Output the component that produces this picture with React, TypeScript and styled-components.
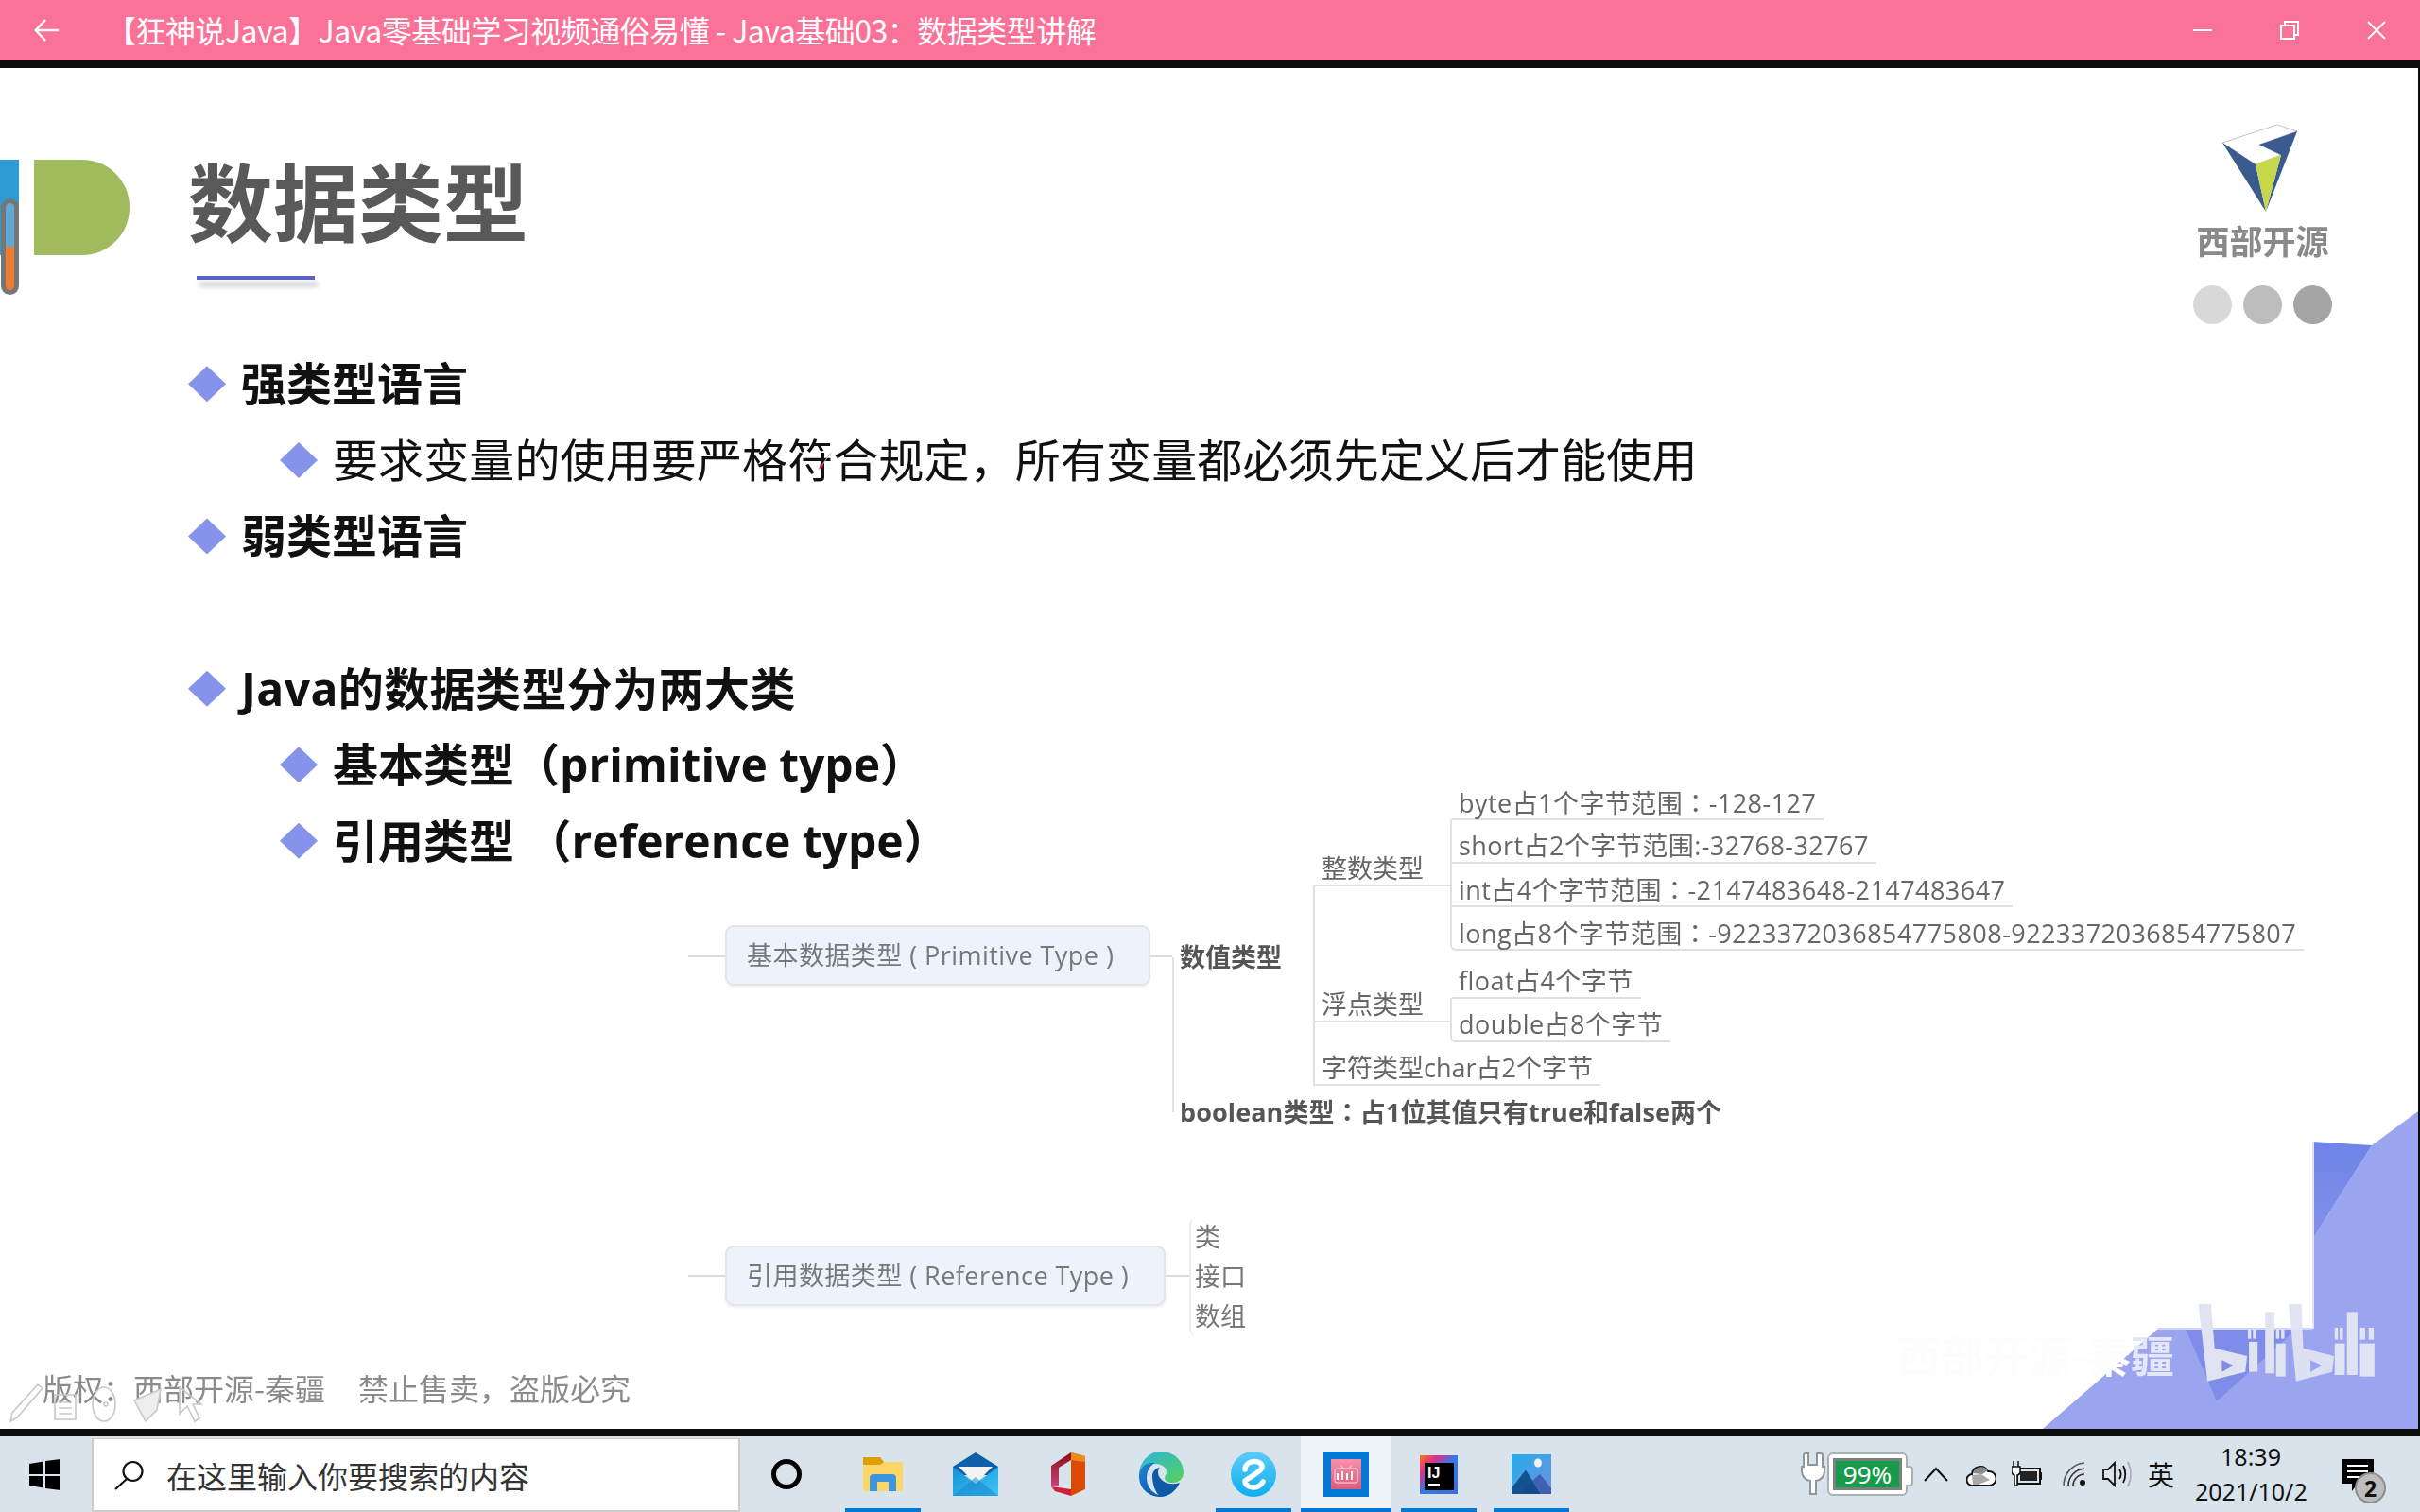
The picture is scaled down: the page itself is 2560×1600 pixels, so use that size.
import React from "react";
import styled, { createGlobalStyle } from "styled-components";

const CJK = `"Noto Sans CJK SC", "Noto Sans", sans-serif`;
const MIXED = `"Open Sans", "Noto Sans CJK SC", sans-serif`;

const Global = createGlobalStyle`
  html, body { margin: 0; padding: 0; background: #fff; }
  * { box-sizing: border-box; }
`;

const Screen = styled.div`
  width: 2560px; height: 1600px; display: flex; flex-direction: column; overflow: hidden;
  font-family: ${CJK}; background: #0b0d0a;
`;

/* ---------- title bar ---------- */
const TitleBar = styled.header`
  height: 64px; flex: none; display: flex; align-items: center; background: #fb7299; color: #fff;
`;
const BackButton = styled.div`
  width: 96px; padding-left: 36px; display: flex; align-items: center; flex: none;
`;
const VideoTitle = styled.h1`
  margin: 0 0 2px 16px; flex: 1; font-size: 32px; font-weight: 400; line-height: 62px; white-space: nowrap;
  font-family: ${CJK}; letter-spacing: -0.5px;
`;
const WindowButton = styled.div`
  width: 92px; height: 64px; flex: none; display: flex; align-items: center; justify-content: center;
`;

const Rule = styled.div`
  height: 8px; flex: none; background: #0b0d0a;
`;

/* ---------- slide ---------- */
const Slide = styled.main`
  position: relative; flex: none; height: 1440px; background: #fff; border-right: 2px solid #0b0d0a;
  overflow: hidden; filter: blur(0.55px);
`;
const SlideHeader = styled.div`
  height: 294px; display: flex; justify-content: space-between; padding: 59px 91px 0 0;
`;
const TitleGroup = styled.div`
  display: flex; align-items: flex-start; padding-top: 38px;
`;
const BlueTab = styled.div`
  position: relative; width: 20px; height: 101px; background: #2e9bd6;
`;
const Thermo = styled.div`
  position: absolute; left: 1px; top: 41px; width: 19px; height: 102px; border: 5px solid #767676;
  border-radius: 10px; background: linear-gradient(#61a8d2 0 50%, #ee7d31 50% 100%);
`;
const GreenTab = styled.div`
  width: 101px; height: 101px; margin-left: 16px; background: #9fbb5e; border-radius: 0 50px 50px 0 / 0 50px 50px 0;
`;
const TitleColumn = styled.div`
  margin: -4px 0 0 62px; display: flex; flex-direction: column;
`;
const SlideTitle = styled.h2`
  margin: 0; font-size: 90px; line-height: 90px; font-weight: 700; color: #595959; white-space: nowrap;
`;
const TitleUnderline = styled.div`
  width: 125px; height: 4px; margin: 37px 0 0 9px; background: #5b62c4; box-shadow: 3px 7px 5px rgba(90, 90, 120, 0.35);
`;
const LogoBlock = styled.div`
  width: 147px; display: flex; flex-direction: column; align-items: center;
`;
const LogoMark = styled.div`
  display: flex; margin-right: 6px;
`;
const LogoText = styled.div`
  margin-top: 4px; font-size: 35px; line-height: 46px; font-weight: 700; color: #8a8a8a; white-space: nowrap;
`;
const DotRow = styled.div`
  width: 100%; margin-top: 25px; display: flex; justify-content: space-between;
`;
const Dot = styled.div<{ $c: string }>`
  width: 41px; height: 41px; border-radius: 50%; background: ${(p) => p.$c};
`;

const BulletList = styled.ul`
  margin: 0; padding: 0; list-style: none;
`;
const Bullet = styled.li<{ $level: number; $bold?: boolean; $track?: number }>`
  height: 80.6px; display: flex; align-items: center; gap: 16px;
  padding-left: ${(p) => (p.$level === 1 ? 199 : 296)}px;
  font-family: ${MIXED}; font-size: 48px; font-weight: ${(p) => (p.$bold ? 700 : 400)}; color: #111; white-space: pre;
  letter-spacing: ${(p) => p.$track ?? 0}px;
`;
const Diamond = styled.i`
  width: 40px; height: 38px; flex: none; background: #8593ea; clip-path: polygon(50% 0, 100% 50%, 50% 100%, 0 50%);
`;
const BulletText = styled.span`
  margin-top: -6px;
`;

/* ---------- mind map ---------- */
const Tree = styled.section<{ $mt: number }>`
  display: flex; align-items: flex-start; margin: ${(p) => p.$mt}px 0 0 728px;
  font-family: ${MIXED}; font-size: 27px; line-height: 34px; color: #666; white-space: nowrap;
`;
const Stub = styled.div<{ $mt: number; $w: number }>`
  width: ${(p) => p.$w}px; height: 2px; margin-top: ${(p) => p.$mt}px; background: #dcdcdc; flex: none;
`;
const RootBox = styled.div<{ $mt: number; $w: number }>`
  width: ${(p) => p.$w}px; height: 64px; margin-top: ${(p) => p.$mt}px; flex: none; padding-left: 21px;
  display: flex; align-items: center; background: #eef2fa; border: 2px solid #e1e5ec; border-radius: 9px;
  color: #74787f; box-shadow: 0 2px 3px rgba(0, 0, 0, 0.06); letter-spacing: 0.45px;
`;
const BranchColumn = styled.div`
  position: relative; padding-left: 8px;
  &::before { content: ""; position: absolute; left: 0; top: 191px; bottom: 17px; width: 2px; background: #e2e2e2; }
`;
const NodeRow = styled.div`
  display: flex; align-items: flex-start;
`;
const BoldNode = styled.div`
  width: 108px; margin-top: 174px; font-weight: 700; color: #555; flex: none;
`;
const BoolNode = styled.div`
  margin-top: 10px; font-weight: 700; color: #555; letter-spacing: 0.1px;
`;
const NumberColumn = styled.div`
  position: relative; margin-left: 33px;
  &::before { content: ""; position: absolute; left: 0; top: 115px; bottom: 0; width: 2px; background: #e0e0e0; }
`;
const Category = styled.div<{ $mt?: number }>`
  display: flex; align-items: flex-start; margin-top: ${(p) => p.$mt ?? 0}px;
`;
const CategoryLabel = styled.div<{ $mt: number }>`
  width: 145px; height: 36px; margin-top: ${(p) => p.$mt}px; padding-left: 9px; flex: none;
  border-bottom: 2px solid #e0e0e0;
`;
const LeafGroup = styled.div`
  display: flex; flex-direction: column; align-items: flex-start;
`;
const Leaf = styled.div`
  height: 46px; padding: 10px 8px 0 7px; border-bottom: 2px solid #e0e0e0; border-left: 2px solid #e0e0e0; color: #666; letter-spacing: 0.45px;
  &:first-child { border-left-color: transparent; }
  &:last-child { border-bottom-left-radius: 6px; }
`;
const Colon = styled.span`
  font-family: "Noto Sans CJK TC", sans-serif;
`;
const CharRow = styled.div`
  display: inline-block; height: 46px; padding: 10px 8px 0 9px; border-bottom: 2px solid #e0e0e0;
`;
const RefList = styled.div`
  padding-left: 4px; border-left: 2px solid #ececec; border-radius: 8px; color: #777;
`;
const RefItem = styled.div`
  height: 42px; display: flex; align-items: center;
`;
const Copyright = styled.footer`
  display: flex; gap: 35px; margin: 34px 0 0 45px; font-size: 32px; line-height: 40px; color: #8b8b8b; white-space: nowrap;
`;

/* ---------- overlays ---------- */
const CornerArt = styled.svg`
  position: absolute; right: 0; bottom: 0;
`;
const Watermark = styled.div`
  position: absolute; right: 258px; bottom: 52px; font-size: 46px; line-height: 56px; font-weight: 700; white-space: nowrap; color: #fdfdfd;
`;
const WatermarkEnd = styled.span`
  color: #e4e7f8;
`;
const PenTools = styled.svg`
  position: absolute; left: 10px; bottom: 6px;
`;
const PenMark = styled.svg`
  position: absolute; left: 866px; top: 406px;
`;

/* ---------- task bar ---------- */
const TaskBar = styled.footer`
  height: 80px; flex: none; display: flex; background: #d9e3ec; color: #111;
`;
const StartButton = styled.div`
  width: 97px; flex: none; display: flex; align-items: center; padding-left: 31px;
`;
const SearchBox = styled.div`
  width: 686px; height: 78px; margin-top: 2px; flex: none; display: flex; align-items: center; padding-left: 22px; gap: 23px;
  background: #fff; border: 2px solid #ccc; border-top-width: 1px; border-bottom-width: 2px; font-size: 32px; color: #333;
`;
const CortanaSlot = styled.div`
  width: 98px; margin-right: 4px; flex: none; display: flex; align-items: center; justify-content: center;
`;
const Slot = styled.div<{ $on?: boolean; $active?: boolean }>`
  position: relative; width: 98px; flex: none; display: flex; align-items: center; justify-content: center;
  &::before {
    content: ""; position: absolute; top: 0; bottom: 0; left: 1px; right: 1px;
    background: ${(p) => (p.$active ? "#eef3f7" : "transparent")};
  }
  &::after {
    content: ""; position: absolute; bottom: 0; height: 4px;
    left: ${(p) => (p.$active ? 1 : 9)}px; right: ${(p) => (p.$active ? 1 : 9)}px;
    background: ${(p) => (p.$on ? "#0078d4" : "transparent")};
  }
  & > svg { position: relative; }
`;
const Tray = styled.div`
  margin-left: auto; display: flex; align-items: center; padding-right: 34px;
`;
const TrayItem = styled.div<{ $ml: number; $w: number }>`
  width: ${(p) => p.$w}px; margin-left: ${(p) => p.$ml}px; flex: none; display: flex; align-items: center; justify-content: center;
`;
const Battery = styled.div`
  position: relative; width: 85px; height: 46px; padding: 4px; background: #fff; border: 2px solid #a9b0b5; border-radius: 6px;
  &::after { content: ""; position: absolute; right: -8px; top: 12px; width: 6px; height: 18px; background: #fff; border: 2px solid #a9b0b5; border-left: 0; border-radius: 0 4px 4px 0; }
`;
const BatteryFill = styled.div`
  height: 100%; display: flex; align-items: center; justify-content: center; background: #179a4a; border: 3px solid #7a7f80;
  font-family: "Noto Sans", sans-serif; font-size: 26px; color: #fff;
`;
const LangMark = styled.span`
  font-size: 28px; line-height: 1; color: #111;
`;
const Clock = styled.div`
  width: 118px; margin-left: 22px; flex: none; text-align: center; font-family: "Noto Sans", sans-serif; font-size: 25px; line-height: 37px; color: #111; white-space: nowrap;
`;
const Notice = styled.div`
  position: relative; width: 52px; height: 60px; margin-left: 34px; padding: 14px 0 0 4px; flex: none;
`;
const NoticeBadge = styled.span`
  position: absolute; left: 17px; top: 28px; width: 33px; height: 33px; border-radius: 50%; background: #bdbdbd; border: 2px solid #8d8d8d;
  display: flex; align-items: center; justify-content: center; font-family: "Noto Sans", sans-serif; font-size: 23px; font-weight: 700; color: #111;
`;

/* ---------- icons ---------- */
const ArrowBack = () => (
  <svg width="26" height="24" viewBox="0 0 26 24" fill="none" stroke="#fff" strokeWidth="2.4">
    <path d="M12 1 1.8 12 12 23M2 12h24" />
  </svg>
);
const Minimize = () => <svg width="20" height="4" viewBox="0 0 20 4"><rect y="1" width="20" height="2" fill="#fff" /></svg>;
const Restore = () => (
  <svg width="20" height="20" viewBox="0 0 20 20" fill="none" stroke="#fff" strokeWidth="2">
    <rect x="1" y="5" width="14" height="14" />
    <path d="M5 5V1h14v14h-4" />
  </svg>
);
const CloseX = () => (
  <svg width="20" height="20" viewBox="0 0 20 20" stroke="#fff" strokeWidth="2"><path d="M1 1l18 18M19 1 1 19" /></svg>
);
const BrandLogo = () => (
  <svg width="84" height="96" viewBox="0 0 84 96">
    <polygon points="2,20 60,1 81,8 41,22 64,33 37,43" fill="#fff" stroke="#b5b5b5" strokeWidth="0.8" />
    <polygon points="2,20 37,43 48,93" fill="#3b5a8f" />
    <polygon points="81,8 41,22 64,33 48,93" fill="#3b5a8f" />
    <polygon points="37,43 64,33 48,93" fill="#c6d84a" />
  </svg>
);
const Corner = () => (
  <CornerArt width="558" height="362" viewBox="0 0 558 362">
    <defs>
      <linearGradient id="cornerDark" x1="0" y1="0" x2="0" y2="1">
        <stop offset="0" stopColor="#6e84e8" />
        <stop offset="1" stopColor="#8490ea" />
      </linearGradient>
    </defs>
    <polygon points="161,362 283,256 446,256 446,162 509,62 558,26 558,362" fill="#9ba4ee" />
    <polygon points="446,58 509,62 446,162" fill="url(#cornerDark)" />
    <polygon points="312,256 430,256 345,333" fill="#7f8cea" />
    <rect x="446" y="58" width="2" height="198" fill="#dfe4fa" />
    <rect x="283" y="255" width="163" height="2" fill="#cfd5f8" />
    <g transform="translate(-40 0) scale(0.3827 0.3333)" fill="#e0e3f1">
      <path fillRule="evenodd" d="M955 690 990 690 1000 830 1090 855 1085 905 980 935ZM1020 868 1052 885 1020 905Z" />
      <path fillRule="evenodd" d="M1205 690 1240 690 1245 830 1330 855 1325 905 1225 935ZM1265 868 1297 885 1265 905Z" opacity="0.95" />
      <rect x="1092" y="770" width="9" height="30" /><rect x="1106" y="770" width="9" height="30" />
      <rect x="1095" y="810" width="24" height="95" />
      <rect x="1140" y="715" width="25" height="195" />
      <rect x="1170" y="770" width="9" height="30" /><rect x="1184" y="770" width="9" height="30" />
      <rect x="1170" y="815" width="26" height="105" />
      <rect x="1332" y="765" width="9" height="38" /><rect x="1346" y="765" width="9" height="38" />
      <rect x="1332" y="815" width="28" height="100" />
      <rect x="1366" y="715" width="29" height="200" />
      <rect x="1402" y="765" width="14" height="38" /><rect x="1426" y="765" width="14" height="38" />
      <rect x="1402" y="815" width="40" height="105" />
    </g>
  </CornerArt>
);
const Tools = () => (
  <PenTools width="205" height="44" viewBox="0 0 205 44" fill="none" stroke="#c9c9c9" strokeWidth="1.6">
    <path d="M1 42 3 33 30 3l5 4L8 38Z" />
    <rect x="48" y="14" width="22" height="26" />
    <path d="M52 22h14M52 28h14M52 34h14" />
    <ellipse cx="100" cy="24" rx="12" ry="18" />
    <circle cx="102" cy="24" r="2" />
    <path d="M132 20l28-12-4 22-12 12Z" fill="#eeeeee" />
    <path d="M180 6v28l8-8 8 16 5-3-7-15h9Z" />
  </PenTools>
);
const WinLogo = () => (
  <svg width="33" height="33" viewBox="0 0 33 33" fill="#000">
    <polygon points="0,5 15,2.5 15,16 0,16" /><polygon points="17,2 33,0 33,16 17,16" />
    <polygon points="0,18 15,18 15,30.5 0,28" /><polygon points="17,18 33,18 33,33 17,31" />
  </svg>
);
const Magnifier = () => (
  <svg width="32" height="32" viewBox="0 0 32 32" fill="none" stroke="#111" strokeWidth="2.2">
    <circle cx="19.5" cy="12" r="10" /><path d="M13 20 1 31" />
  </svg>
);
const Ring = () => (
  <svg width="34" height="34" viewBox="0 0 34 34" fill="none"><circle cx="17" cy="17" r="13.5" stroke="#000" strokeWidth="5" /></svg>
);
const FolderIcon = () => (
  <svg width="42" height="36" viewBox="0 0 42 36">
    <path d="M0 0h18l4 5-4 6H0Z" fill="#df9f00" />
    <path d="M0 8h18l4-3h20v29a2 2 0 0 1-2 2H2a2 2 0 0 1-2-2Z" fill="#fcd667" />
    <path d="M7 36V22a4 4 0 0 1 4-4h20a4 4 0 0 1 4 4v14h-8V26H15v10Z" fill="#3f95dd" />
  </svg>
);
const MailIcon = () => (
  <svg width="48" height="46" viewBox="0 0 48 46">
    <defs><linearGradient id="mailB" x1="0" y1="0" x2="1" y2="1"><stop offset="0" stopColor="#1490d8" /><stop offset="1" stopColor="#3fc6f6" /></linearGradient></defs>
    <polygon points="0,15 24,0 48,15 48,24 0,24" fill="#0f5fa9" />
    <polygon points="6,15 42,15 24,33" fill="#f3f3f3" />
    <polygon points="0,15 24,33 48,15 48,46 0,46" fill="url(#mailB)" />
    <polygon points="0,46 24,26 48,46" fill="#1a86cf" opacity="0.55" />
  </svg>
);
const OfficeIcon = () => (
  <svg width="36" height="46" viewBox="0 0 36 46">
    <defs><linearGradient id="offR" x1="0" y1="0" x2="0" y2="1"><stop offset="0" stopColor="#8e0f12" /><stop offset="1" stopColor="#c7437e" /></linearGradient></defs>
    <path d="M0 14 21 0v8L8 16v20l-8 0Z" fill="url(#offR)" />
    <path d="M0 36l21 3v7L4 41Z" fill="#d21e35" />
    <path d="M21 0 36 4v35L21 46Z" fill="#dd4a06" />
    <path d="M21 0 36 4v6L21 8Z" fill="#f08a1c" />
  </svg>
);
const EdgeIcon = () => (
  <svg width="48" height="48" viewBox="0 0 48 48">
    <defs>
      <linearGradient id="edgeA" x1="0" y1="0" x2="1" y2="1"><stop offset="0" stopColor="#2bb3df" /><stop offset="1" stopColor="#56d35a" /></linearGradient>
      <linearGradient id="edgeB" x1="0" y1="0" x2="1" y2="1"><stop offset="0" stopColor="#1c87d8" /><stop offset="1" stopColor="#0c4f9c" /></linearGradient>
    </defs>
    <path d="M24 0c14 0 24 10 24 22 0 7-5 11-11 11-5 0-9-2-9-5 0-2 2-3 2-7 0-5-6-8-13-8C10 13 3 19 1 24 2 10 12 0 24 0Z" fill="url(#edgeA)" />
    <path d="M1 24C3 15 11 11 18 12c-6 3-9 9-9 16 0 10 8 19 19 20h-4C10 48 0 38 1 24Z" fill="url(#edgeB)" />
    <path d="M15 26c0-5 4-9 8-9-3 3-3 9 3 14 5 4 12 4 18 2-4 9-12 15-21 15-5-5-8-14-8-22Z" fill="#0e5aa8" />
  </svg>
);
const BrowserIcon = () => (
  <svg width="48" height="48" viewBox="0 0 48 48">
    <defs><linearGradient id="br" x1="0" y1="0" x2="0" y2="1"><stop offset="0" stopColor="#5ccbfa" /><stop offset="1" stopColor="#0eaff0" /></linearGradient></defs>
    <circle cx="24" cy="24" r="24" fill="url(#br)" />
    <path d="M15 19C15 9 31 8 33 15 34 19 30 21 15 31 15 39 29 41 34 32" fill="none" stroke="#fff" strokeWidth="5.5" strokeLinecap="round" strokeLinejoin="round" />
  </svg>
);
const BiliTile = () => (
  <svg width="48" height="48" viewBox="0 0 48 48">
    <defs><linearGradient id="bl" x1="0" y1="0" x2="0" y2="1"><stop offset="0" stopColor="#f98fab" /><stop offset="1" stopColor="#dd5b7d" /></linearGradient></defs>
    <rect width="48" height="48" fill="#0078d4" />
    <rect x="8" y="8" width="32" height="32" fill="url(#bl)" />
    <rect x="12" y="18" width="24" height="15" rx="2" fill="none" stroke="#fbe1e8" strokeWidth="1" />
    <path d="M14 23h2v7h-2zM19 21h2v9h-2zM24 23h2v7h-2zM29 21h2v9h-2z" fill="#fff" />
    <path d="M18 14l3 4M30 14l-3 4" stroke="#fbe1e8" strokeWidth="1" />
  </svg>
);
const IdeaIcon = () => (
  <svg width="40" height="41" viewBox="0 0 40 41">
    <defs><linearGradient id="ij" x1="0" y1="0" x2="1" y2="1"><stop offset="0" stopColor="#f97a12" /><stop offset="0.25" stopColor="#d9308e" /><stop offset="0.5" stopColor="#2e7be8" /><stop offset="1" stopColor="#3f6ce0" /></linearGradient></defs>
    <rect width="40" height="41" fill="url(#ij)" />
    <rect x="5" y="8" width="31" height="29" fill="#000" />
    <text x="8" y="24" fill="#fff" fontFamily='"Liberation Sans", sans-serif' fontWeight="700" fontSize="16">IJ</text>
    <rect x="9" y="30" width="12" height="2" fill="#fff" />
  </svg>
);
const PhotosIcon = () => (
  <svg width="42" height="42" viewBox="0 0 42 42">
    <defs><linearGradient id="ph" x1="0" y1="0" x2="1" y2="1"><stop offset="0" stopColor="#23aeeb" /><stop offset="1" stopColor="#6f8fe0" /></linearGradient></defs>
    <rect width="42" height="42" fill="url(#ph)" />
    <ellipse cx="28" cy="9" rx="4" ry="4.5" fill="#f2f2f2" />
    <polygon points="0,36 15,17 31,42 0,42" fill="#134a8a" />
    <polygon points="0,36 15,17 22,28 10,42 0,42" fill="#15508f" />
    <polygon points="22,28 30,21 42,36 42,42 31,42" fill="#3f5fb0" />
  </svg>
);
const Plug = () => (
  <svg width="26" height="46" viewBox="0 0 26 46" fill="#fff" stroke="#8f979c" strokeWidth="2">
    <path d="M5 1h3v12h9V1h3v0h1a2 2 0 0 1 2 2v12h2v5a10 10 0 0 1-9 10v14h-6V30A10 10 0 0 1 1 20v-5h2V3a2 2 0 0 1 2-2Z" />
  </svg>
);
const Chevron = () => (
  <svg width="26" height="16" viewBox="0 0 26 16" fill="none" stroke="#111" strokeWidth="2"><path d="M1 15 13 2l12 13" /></svg>
);
const Cloud = () => (
  <svg width="32" height="26" viewBox="0 0 32 26">
    <path d="M7 25a6 6 0 0 1-1-12 9 9 0 0 1 17-3 7.5 7.5 0 0 1 2 15Z" fill="#fff" stroke="#111" strokeWidth="2" />
    <path d="M7 12a9 9 0 0 1 16-3l-6 4Z" fill="#8b8b8b" />
    <path d="M6 14l10-1 9 6-12 5H7Z" fill="#a9a9a9" />
  </svg>
);
const SmallBattery = () => (
  <svg width="32" height="28" viewBox="0 0 32 28">
    <rect x="6" y="8" width="24" height="16" fill="none" stroke="#111" strokeWidth="2" />
    <rect x="9" y="11" width="18" height="10" fill="#222" />
    <rect x="30" y="12" width="2" height="8" fill="#111" />
    <path d="M2 0v6M7 0v6M0 6h9v5a4 4 0 0 1-3 4v11H3V15a4 4 0 0 1-3-4Z" fill="#fff" stroke="#111" strokeWidth="1.5" />
  </svg>
);
const Wifi = () => (
  <svg width="24" height="26" viewBox="0 0 24 26" fill="none" stroke="#333">
    <path d="M1 25C1 13 10 2 23 1" strokeWidth="1.6" opacity="0.8" />
    <path d="M6 25c0-9 7-17 17-18" strokeWidth="1.6" />
    <path d="M11 25c0-6 5-12 12-12" strokeWidth="1.6" />
    <circle cx="21" cy="22" r="3" fill="#111" stroke="none" />
  </svg>
);
const Volume = () => (
  <svg width="32" height="28" viewBox="0 0 32 28" fill="none" stroke="#111" strokeWidth="1.8">
    <path d="M1 9h5l7-7v24l-7-7H1Z" />
    <path d="M18 9c2 3 2 7 0 10" />
    <path d="M22 5c3 5 3 13 0 18" />
    <path d="M27 1c4 8 4 18 0 26" stroke="#aab" />
  </svg>
);
const NoticeBubble = () => (
  <svg width="33" height="34" viewBox="0 0 33 34">
    <path d="M0 0h33v26H16l-6 8v-8H0Z" fill="#000" />
    <path d="M5 7h22M5 13h22M5 19h14" stroke="#fff" strokeWidth="2" />
  </svg>
);

export default function App() {
  return (
    <Screen>
      <Global />
      <TitleBar>
        <BackButton><ArrowBack /></BackButton>
        <VideoTitle>【狂神说Java】Java零基础学习视频通俗易懂 - Java基础03：数据类型讲解</VideoTitle>
        <WindowButton><Minimize /></WindowButton>
        <WindowButton><Restore /></WindowButton>
        <WindowButton><CloseX /></WindowButton>
      </TitleBar>
      <Rule />
      <Slide>
        <SlideHeader>
          <TitleGroup>
            <BlueTab><Thermo /></BlueTab>
            <GreenTab />
            <TitleColumn>
              <SlideTitle>数据类型</SlideTitle>
              <TitleUnderline />
            </TitleColumn>
          </TitleGroup>
          <LogoBlock>
            <LogoMark><BrandLogo /></LogoMark>
            <LogoText>西部开源</LogoText>
            <DotRow>
              <Dot $c="#d8d8d8" /><Dot $c="#bcbcbc" /><Dot $c="#a5a5a5" />
            </DotRow>
          </LogoBlock>
        </SlideHeader>

        <BulletList>
          <Bullet $level={1} $bold><Diamond /><BulletText>强类型语言</BulletText></Bullet>
          <Bullet $level={2} $track={0.12}><Diamond /><BulletText>要求变量的使用要严格符合规定，所有变量都必须先定义后才能使用</BulletText></Bullet>
          <Bullet $level={1} $bold><Diamond /><BulletText>弱类型语言</BulletText></Bullet>
          <Bullet $level={1} />
          <Bullet $level={1} $bold $track={0.4}><Diamond /><BulletText>Java的数据类型分为两大类</BulletText></Bullet>
          <Bullet $level={2} $bold><Diamond /><BulletText>基本类型（primitive type）</BulletText></Bullet>
          <Bullet $level={2} $bold><Diamond /><BulletText>引用类型 （reference type）</BulletText></Bullet>
        </BulletList>

        <Tree $mt={-108}>
          <Stub $mt={189} $w={39} />
          <RootBox $mt={157} $w={450}>基本数据类型 ( Primitive Type )</RootBox>
          <Stub $mt={189} $w={23} />
          <BranchColumn>
            <NodeRow>
              <BoldNode>数值类型</BoldNode>
              <NumberColumn>
                <Category>
                  <CategoryLabel $mt={80}>整数类型</CategoryLabel>
                  <LeafGroup>
                    <Leaf>byte占1个字节范围<Colon>：</Colon>-128-127</Leaf>
                    <Leaf>short占2个字节范围:-32768-32767</Leaf>
                    <Leaf>int占4个字节范围<Colon>：</Colon>-2147483648-2147483647</Leaf>
                    <Leaf>long占8个字节范围<Colon>：</Colon>-9223372036854775808-9223372036854775807</Leaf>
                  </LeafGroup>
                </Category>
                <Category $mt={5}>
                  <CategoryLabel $mt={35}>浮点类型</CategoryLabel>
                  <LeafGroup>
                    <Leaf>float占4个字节</Leaf>
                    <Leaf>double占8个字节</Leaf>
                  </LeafGroup>
                </Category>
                <CharRow>字符类型char占2个字节</CharRow>
              </NumberColumn>
            </NodeRow>
            <BoolNode>boolean类型<Colon>：</Colon>占1位其值只有true和false两个</BoolNode>
          </BranchColumn>
        </Tree>

        <Tree $mt={94}>
          <Stub $mt={61} $w={39} />
          <RootBox $mt={30} $w={466}>引用数据类型 ( Reference Type )</RootBox>
          <Stub $mt={61} $w={25} />
          <RefList>
            <RefItem>类</RefItem>
            <RefItem>接口</RefItem>
            <RefItem>数组</RefItem>
          </RefList>
        </Tree>

        <Copyright>
          <span>版权：西部开源-秦疆</span>
          <span>禁止售卖，盗版必究</span>
        </Copyright>

        <Corner />
        <Watermark>西部开源-秦<WatermarkEnd>疆</WatermarkEnd></Watermark>
        <Tools />
        <PenMark width="14" height="20" viewBox="0 0 14 20">
          <path d="M3 15 13 1" stroke="#bbb" strokeWidth="1" />
          <path d="M0 19l2-7 3 3Z" fill="#e0356a" />
        </PenMark>
      </Slide>
      <Rule />
      <TaskBar>
        <StartButton><WinLogo /></StartButton>
        <SearchBox><Magnifier />在这里输入你要搜索的内容</SearchBox>
        <CortanaSlot><Ring /></CortanaSlot>
        <Slot $on><FolderIcon /></Slot>
        <Slot><MailIcon /></Slot>
        <Slot><OfficeIcon /></Slot>
        <Slot><EdgeIcon /></Slot>
        <Slot $on><BrowserIcon /></Slot>
        <Slot $on $active><BiliTile /></Slot>
        <Slot $on><IdeaIcon /></Slot>
        <Slot $on><PhotosIcon /></Slot>
        <Tray>
          <TrayItem $ml={0} $w={26}><Plug /></TrayItem>
          <TrayItem $ml={2} $w={85}><Battery><BatteryFill>99%</BatteryFill></Battery></TrayItem>
          <TrayItem $ml={17} $w={26}><Chevron /></TrayItem>
          <TrayItem $ml={19} $w={32}><Cloud /></TrayItem>
          <TrayItem $ml={16} $w={32}><SmallBattery /></TrayItem>
          <TrayItem $ml={22} $w={24}><Wifi /></TrayItem>
          <TrayItem $ml={18} $w={32}><Volume /></TrayItem>
          <TrayItem $ml={16} $w={28}><LangMark>英</LangMark></TrayItem>
          <Clock><div>18:39</div><div>2021/10/2</div></Clock>
          <Notice>
            <NoticeBubble />
            <NoticeBadge>2</NoticeBadge>
          </Notice>
        </Tray>
      </TaskBar>
    </Screen>
  );
}
